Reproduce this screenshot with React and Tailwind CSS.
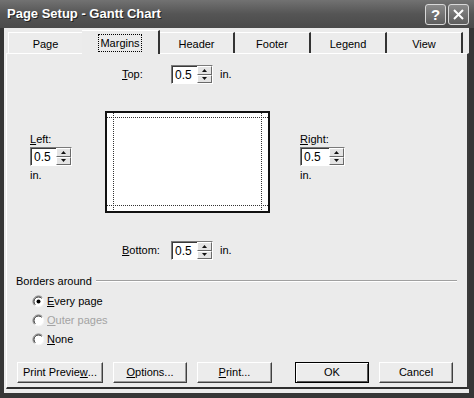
import React from 'react';

const tabs = ['Page', 'Margins', 'Header', 'Footer', 'Legend', 'View'];
const tabWidths = [74, 78, 75, 76, 76, 76];

const SpinBox = ({ value, width = 'w-[42px]' }) => (
  <div className={`${width} h-[19px] flex bg-white border-t border-l border-[#7a7a7a] border-r border-b border-r-white border-b-white shadow-[inset_1px_1px_0_#3a3a3a]`}>
    <div className="flex-1 pl-[3px] flex items-center text-[12px] leading-none">{value}</div>
    <div className="w-[15px] flex flex-col">
      {['up', 'down'].map((dir) => (
        <div
          key={dir}
          className="flex-1 bg-[#e4e4e4] border-t border-l border-white border-r border-b border-r-[#6a6a6a] border-b-[#6a6a6a] flex items-center justify-center"
        >
          <svg width="5" height="3" viewBox="0 0 5 3">
            {dir === 'up' ? <path d="M2.5 0 L5 3 L0 3 Z" fill="#111" /> : <path d="M0 0 L5 0 L2.5 3 Z" fill="#111" />}
          </svg>
        </div>
      ))}
    </div>
  </div>
);

const Radio = ({ checked, disabled, children, h = 'h-[20px]' }) => (
  <div className={`${h} flex items-center gap-[2px] ${disabled ? 'text-[#a3a3a3]' : 'text-black'}`}>
    <svg width="13" height="13" viewBox="0 0 13 13">
      <circle cx="6.5" cy="6.5" r="5.5" fill="#fff" />
      <path d="M2.6 10.4 A5.5 5.5 0 0 1 10.4 2.6" fill="none" stroke="#7a7a7a" strokeWidth="1" />
      <path d="M3.3 9.7 A4.5 4.5 0 0 1 9.7 3.3" fill="none" stroke="#2a2a2a" strokeWidth="1" />
      <path d="M10.4 2.6 A5.5 5.5 0 0 1 2.6 10.4" fill="none" stroke="#f4f4f4" strokeWidth="1" />
      {checked && <circle cx="6.5" cy="6.5" r="2" fill="#000" />}
    </svg>
    <span>{children}</span>
  </div>
);

const Button = ({ children, width, isDefault }) => (
  <button
    className={`${width} h-[21px] bg-[#ececec] flex items-center justify-center text-[11px] leading-none ${
      isDefault
        ? 'border border-black shadow-[inset_1px_1px_0_#fff,inset_-1px_-1px_0_#555]'
        : 'border-t border-l border-white border-r border-b border-r-[#404040] border-b-[#404040] shadow-[inset_-1px_-1px_0_#9a9a9a]'
    }`}
  >
    {children}
  </button>
);

const TitleButton = ({ children }) => (
  <div className="w-[21px] h-[21px] rounded-[3px] border border-[#d8d8d8] bg-gradient-to-b from-[#8a8a8a] to-[#5e5e5e] flex items-center justify-center text-white text-[15px] font-bold leading-none">
    {children}
  </div>
);

export default function App() {
  return (
    <div className="w-[474px] h-[398px] bg-[#363636] flex flex-col font-['Liberation_Sans',Arial,sans-serif] text-[11px] text-black overflow-hidden">
      {/* Title bar */}
      <div className="h-[28px] flex items-center pl-[7px] pr-[5px] bg-gradient-to-b from-[#727272] via-[#555555] to-[#4a4a4a]">
        <span className="text-white text-[13px] font-bold flex-1 [text-shadow:1px_1px_0_#222]">Page Setup - Gantt Chart</span>
        <div className="flex gap-[2px]">
          <TitleButton>?</TitleButton>
          <TitleButton>
            <svg width="11" height="11" viewBox="0 0 11 11">
              <path d="M1 1 L10 10 M10 1 L1 10" stroke="#fff" strokeWidth="2" />
            </svg>
          </TitleButton>
        </div>
      </div>

      {/* Body */}
      <div className="flex-1 ml-[4px] mr-[5px] mb-[5px] bg-[#ebebeb] flex flex-col">
        {/* Tabs */}
        <div className="h-[25px] pl-[4px] flex items-end">
          {tabs.map((t, i) => {
            const active = i === 1;
            return (
              <div
                key={t}
                style={{ width: tabWidths[i] }}
                className={
                  active
                    ? 'relative z-10 h-[24px] -mb-[1px] bg-[#ebebeb] flex items-center justify-center border-t border-white border-r-2 border-r-[#333] pt-[1px]'
                    : `h-[21px] flex items-center justify-center pt-[3px] bg-[#ececec] border-t border-white ${
                        i === 0 ? 'border-l' : ''
                      } ${i > 1 ? 'border-r-2 border-r-[#333]' : ''}`
                }
              >
                <span className={active ? 'outline-1 outline-dotted outline-black px-[1px]' : ''}>{t}</span>
              </div>
            );
          })}
        </div>

        {/* Panel */}
        <div className="flex-1 ml-[2px] mb-[4px] border-t border-l border-white border-r-2 border-b-2 border-r-[#3a3a3a] border-b-[#2e2e2e] flex flex-col">
          {/* Margins area */}
          <div className="mt-[11px] flex">
            <div className="w-[98px] pl-[23px] pt-[67px] flex flex-col">
              <div className="h-[15px] flex items-center">
                <span><span className="underline">L</span>eft:</span>
              </div>
              <SpinBox value="0.5" />
              <div className="h-[18px] flex items-center">in.</div>
            </div>

            <div className="w-[165px] flex flex-col">
              <div className="h-[19px] pl-[17px] flex items-center">
                <span className="w-[49px]"><span className="underline">T</span>op:</span>
                <SpinBox value="0.5" />
                <span className="ml-[7px]">in.</span>
              </div>
              <div className="mt-[27px] h-[102px] bg-white border-2 border-[#111]">
                <svg width="161" height="98" viewBox="0 0 161 98">
                  <g stroke="#333" strokeWidth="1" strokeDasharray="1 1">
                    <line x1="6.5" y1="0" x2="6.5" y2="98" />
                    <line x1="154.5" y1="0" x2="154.5" y2="98" />
                    <line x1="0" y1="4.5" x2="161" y2="4.5" />
                    <line x1="0" y1="92.5" x2="161" y2="92.5" />
                  </g>
                </svg>
              </div>
              <div className="mt-[28px] h-[19px] pl-[17px] flex items-center">
                <span className="w-[49px]"><span className="underline">B</span>ottom:</span>
                <SpinBox value="0.5" />
                <span className="ml-[7px]">in.</span>
              </div>
            </div>

            <div className="pl-[30px] pt-[67px] flex flex-col">
              <div className="h-[15px] flex items-center">
                <span><span className="underline">R</span>ight:</span>
              </div>
              <SpinBox value="0.5" width="w-[45px]" />
              <div className="h-[18px] flex items-center">in.</div>
            </div>
          </div>

          {/* Borders around */}
          <div className="mt-[14px] h-[14px] pl-[9px] pr-[10px] flex items-center">
            <span>Borders around</span>
            <div className="flex-1 ml-[4px] h-[2px] border-t border-[#a0a0a0] border-b border-b-white" />
          </div>
          <div className="mt-[3px] pl-[25px] flex flex-col">
            <Radio checked>
              <span className="underline">E</span>very page
            </Radio>
            <Radio disabled h="h-[19px]">
              <span className="underline">O</span>uter pages
            </Radio>
            <Radio h="h-[19px]">
              <span className="underline">N</span>one
            </Radio>
          </div>

          {/* Buttons */}
          <div className="mt-[13px] pl-[10px] flex">
            <Button width="w-[86px]">
              Print Previe<span className="underline">w</span>...
            </Button>
            <div className="ml-[10px]">
              <Button width="w-[74px]">
                <span className="underline">O</span>ptions...
              </Button>
            </div>
            <div className="ml-[10px]">
              <Button width="w-[75px]">
                <span className="underline">P</span>rint...
              </Button>
            </div>
            <div className="ml-[23px]">
              <Button width="w-[74px]" isDefault>OK</Button>
            </div>
            <div className="ml-[10px]">
              <Button width="w-[74px]">Cancel</Button>
            </div>
          </div>
        </div>
      </div>
    </div>
  );
}
